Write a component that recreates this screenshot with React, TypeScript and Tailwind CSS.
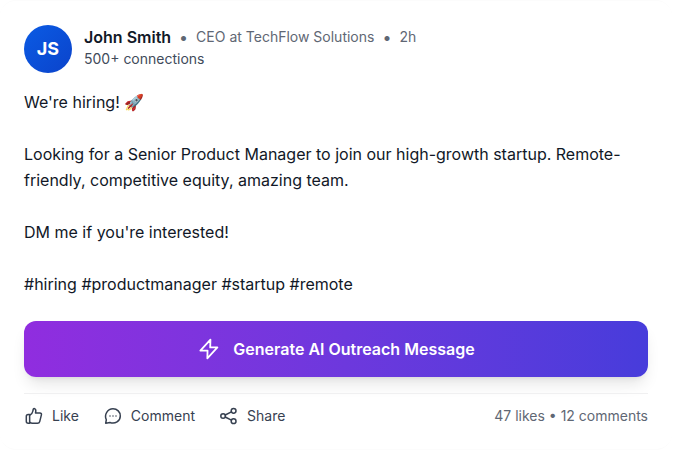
import type { ReactNode } from "react";

function Icon({ children, className = "size-5" }: { children: ReactNode; className?: string }) {
  return (
    <svg
      viewBox="0 0 20 20"
      fill="none"
      stroke="currentColor"
      strokeWidth="1.5"
      strokeLinecap="round"
      strokeLinejoin="round"
      aria-hidden="true"
      className={className}
    >
      {children}
    </svg>
  );
}

function Action({ label, children }: { label: string; children: ReactNode }) {
  return (
    <button type="button" className="flex items-center gap-2 text-sm text-[#374151]">
      <Icon>{children}</Icon>
      {label}
    </button>
  );
}

export default function App() {
  return (
    <article className="mr-px rounded-2xl border-y border-[#fcfcfc] bg-white px-6 pt-6 pb-[23px] font-['Inter',sans-serif] text-[#111827]">
      <header className="flex items-start gap-3">
        <div className="flex size-12 shrink-0 items-center justify-center rounded-full bg-linear-to-br from-[#0b5be4] to-[#0b43cb] text-lg font-bold text-white">
          JS
        </div>
        <div>
          <div className="flex items-center gap-2">
            <h2 className="text-base leading-6 font-semibold text-[#111827]">John Smith</h2>
            <span className="text-[#5f6774]">•</span>
            <span className="text-sm text-[#5f6774]">CEO at TechFlow Solutions</span>
            <span className="text-[#5f6774]">•</span>
            <span className="text-sm text-[#5f6774]">2h</span>
          </div>
          <p className="text-sm text-[#414b5a]">500+ connections</p>
        </div>
      </header>

      <p className="mt-4 text-base leading-[26px] whitespace-pre-line">
        {"We're hiring! 🚀\n\nLooking for a Senior Product Manager to join our high-growth startup. Remote-friendly, competitive equity, amazing team.\n\nDM me if you're interested!\n\n#hiring #productmanager #startup #remote"}
      </p>

      <button
        type="button"
        className="mt-6 flex h-14 w-full items-center justify-center gap-3 rounded-xl bg-linear-to-r from-[#902ddf] to-[#473cdb] font-semibold text-white shadow-lg"
      >
        <Icon className="size-6">
          <path d="M11.2 2.2 2.8 11.3H8.8L8.6 17.8 17 8.7H11Z" />
        </Icon>
        Generate AI Outreach Message
      </button>

      <footer className="mt-4 flex items-center justify-between border-t border-[#f0f0f1] pt-3">
        <div className="flex items-center gap-6">
          <Action label="Like">
            <path d="M5.6 9.4C7.4 8.4 8.6 7 8.9 5L9.2 3.3C9.3 2.6 10 2.4 10.6 2.7 11.8 3.3 12 4.6 11.7 6L11.5 6.9H15.9C17.1 6.9 17.7 7.8 17.4 8.9L15.7 15.6C15.4 16.8 14.7 17.3 13.5 17.3H8.4C7.3 17.3 6.5 17 5.8 16.3" />
            <path d="M5.6 8.6H4.2C2.8 8.6 2.3 9.4 2.3 10.6V15.2C2.3 16.5 2.9 17.2 4.2 17.2H5.7Z" />
          </Action>
          <Action label="Comment">
            <path d="M2.7 17.2 3.3 13.8C.9 8.4 4.6 2.8 10 2.8c4.2 0 7.3 3.2 7.3 7.1 0 5.2-5.2 8.4-10.3 6.6Z" />
            <path d="M7 10h.01M10 10h.01M13 10h.01" />
          </Action>
          <Action label="Share">
            <circle cx="4.1" cy="10" r="2.3" />
            <circle cx="14.6" cy="4.8" r="2.4" />
            <circle cx="14.6" cy="15.2" r="2.4" />
            <path d="m6.2 9 6.2-3.1M6.2 11l6.2 3.1" />
          </Action>
        </div>
        <p className="text-sm leading-5 text-[#5f6774]">47 likes • 12 comments</p>
      </footer>
    </article>
  );
}
